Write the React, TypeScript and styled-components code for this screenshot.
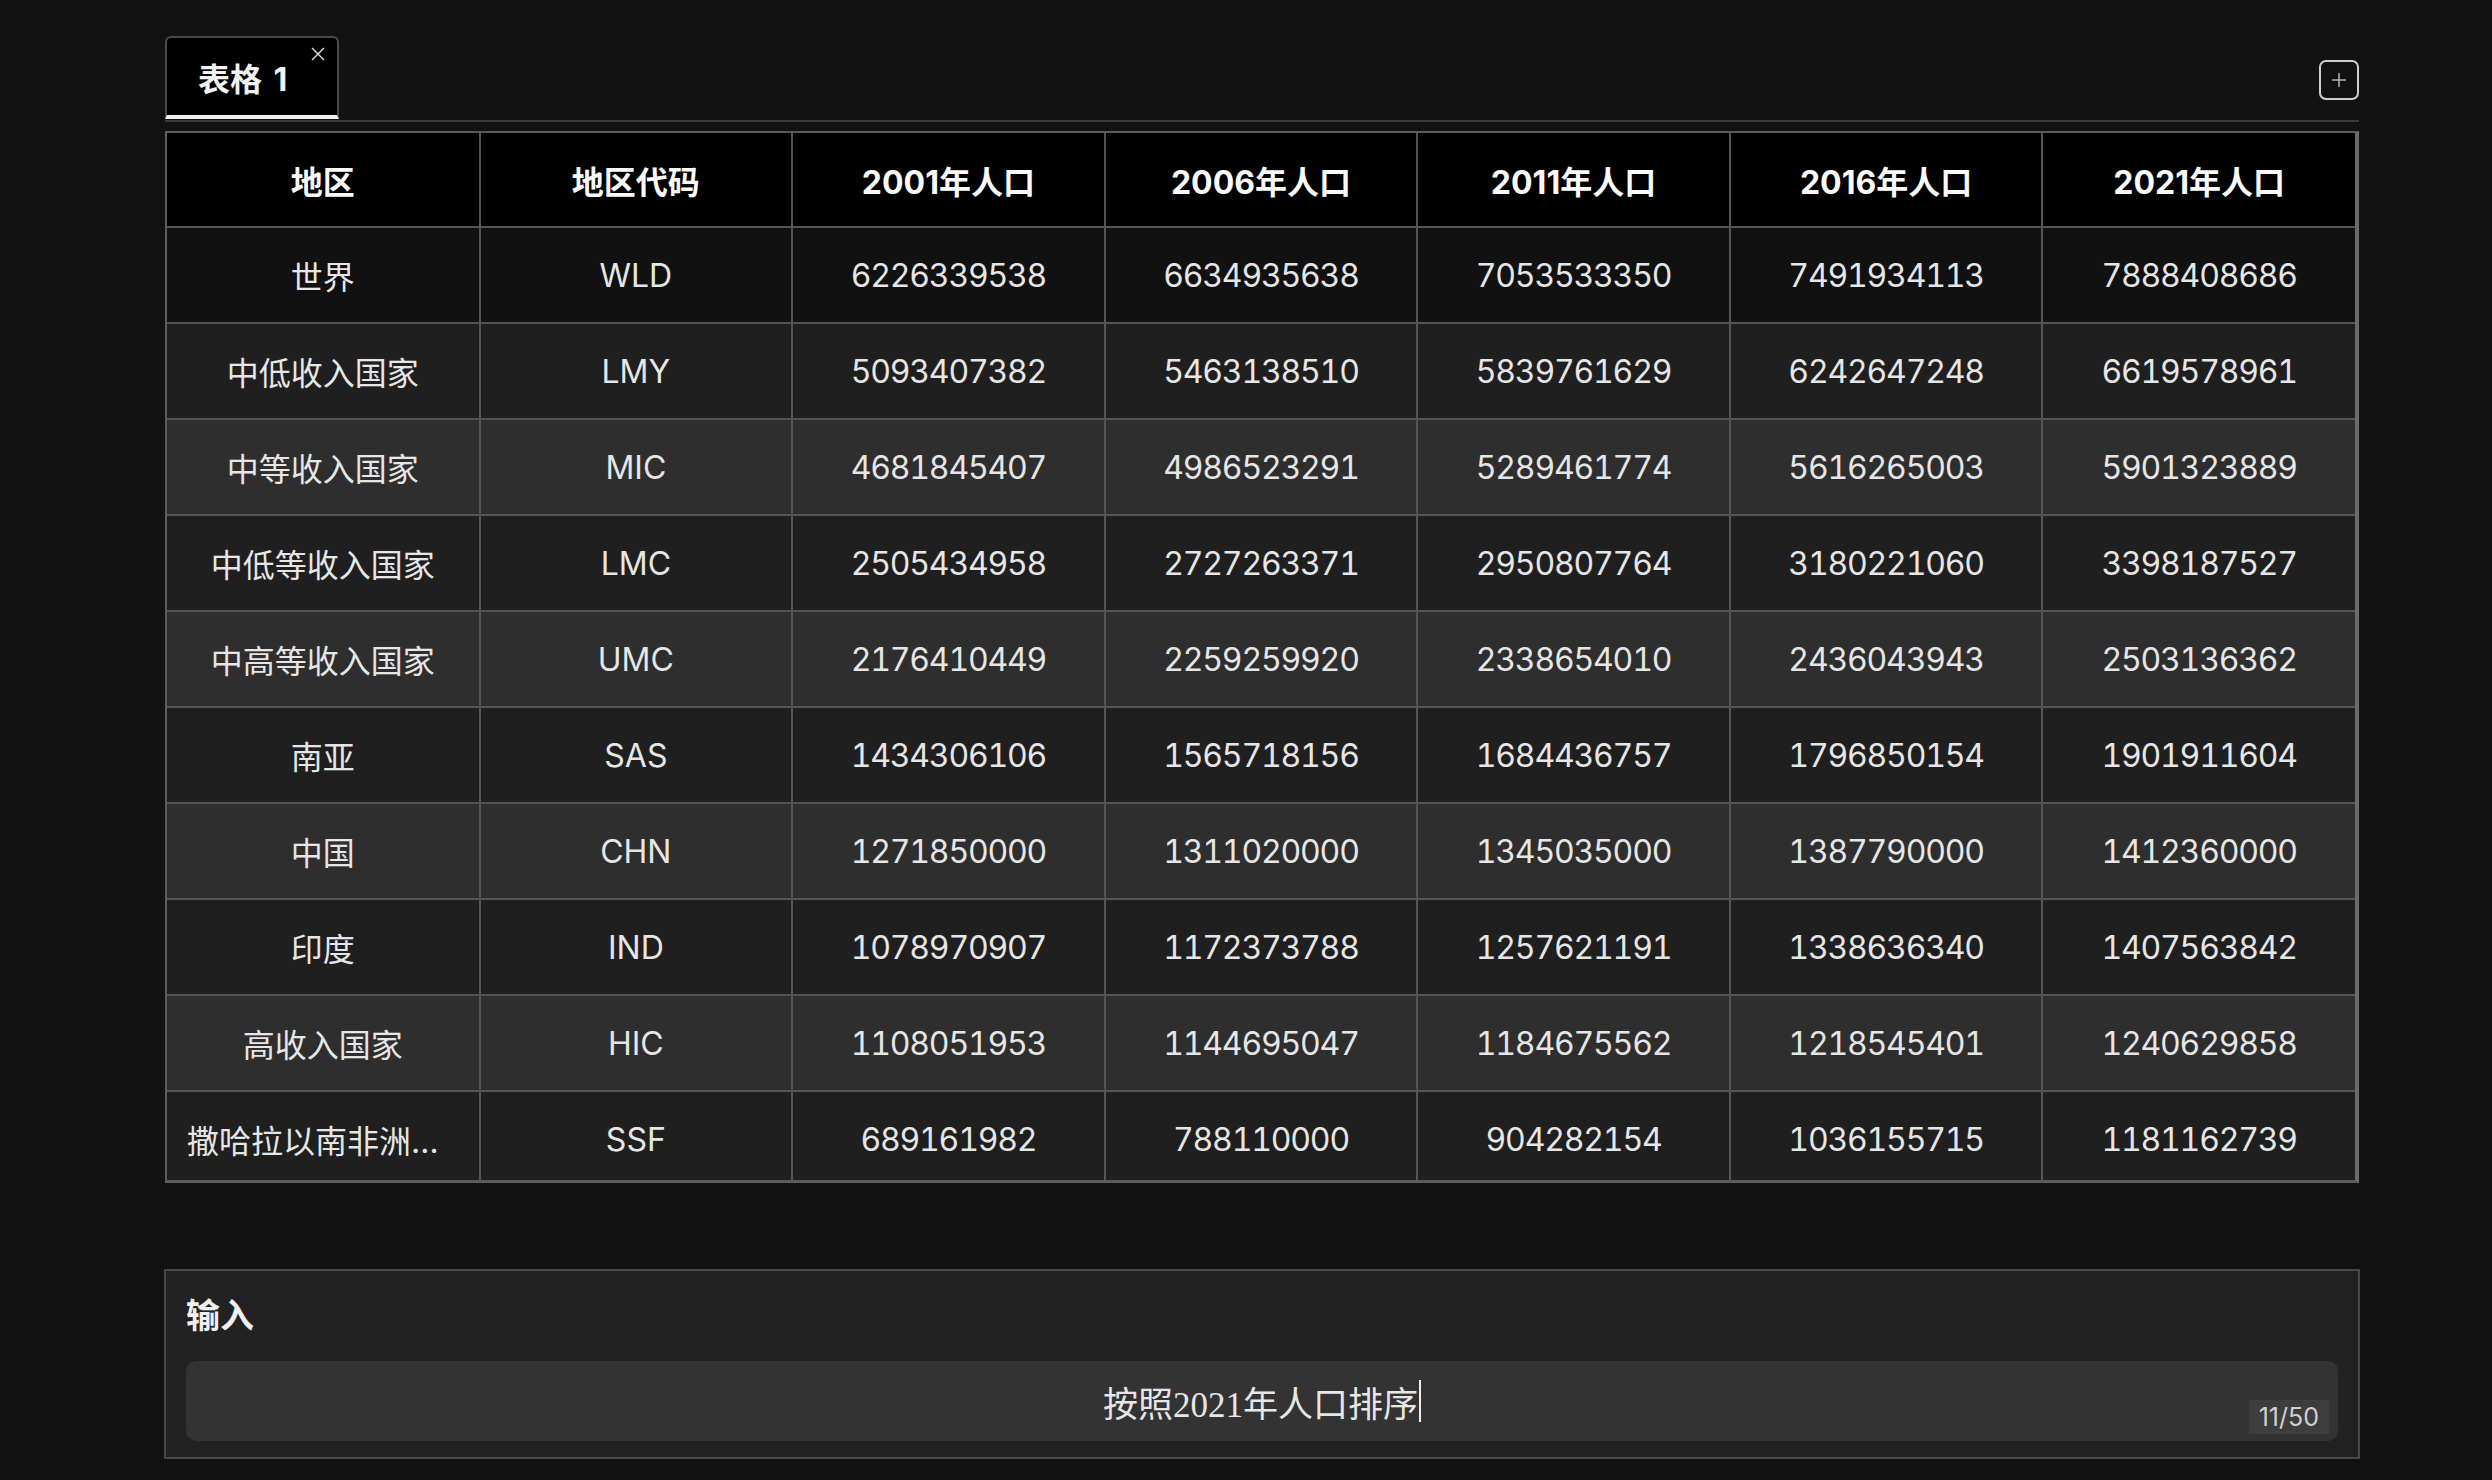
import styled, { createGlobalStyle } from 'styled-components';

const GlobalStyle = createGlobalStyle`
  body {
    margin: 0;
    background: #121212;
    color: #e8e8e8;
    font-family: Inter, "Noto Sans CJK SC", sans-serif;
  }
`;

const Page = styled.div`
  width: 2194px;
  margin-left: 165px;
  padding-top: 36px;
`;

const TabBar = styled.div`
  display: flex;
  align-items: center;
  justify-content: space-between;
  border-bottom: 2px solid #3a3a3a;
  padding-bottom: 1px;
`;

const Tab = styled.div`
  position: relative;
  box-sizing: border-box;
  width: 174px;
  height: 83px;
  display: flex;
  align-items: center;
  padding-left: 31px;
  background: #000;
  border: 2px solid #4a4a4a;
  border-bottom: 4px solid #f2f2f2;
  border-radius: 6px 6px 0 0;
  color: #f2f2f2;
  font-size: 32px;
  font-weight: 700;
  word-spacing: 4px;
`;

const CloseIcon = styled.svg`
  position: absolute;
  top: 9px;
  right: 12px;
  width: 14px;
  height: 14px;
`;

const AddButton = styled.button`
  width: 40px;
  height: 40px;
  margin-top: 4px;
  padding: 0;
  display: flex;
  align-items: center;
  justify-content: center;
  background: transparent;
  border: 2px solid #cfcfcf;
  border-radius: 7px;
`;

const TableFrame = styled.div`
  margin-top: 9px;
  height: 1047px;
  overflow: hidden;
  border: 2px solid #5c5c5c;
  border-right: 4px solid #6a6a6a;
  border-bottom-width: 3px;
`;

const Table = styled.table`
  width: 100%;
  border-collapse: collapse;
  table-layout: fixed;
`;

const Th = styled.th`
  height: 93px;
  background: #000;
  color: #fafafa;
  font-size: 32px;
  font-weight: 700;
  border: 2px solid #555;
  border-top: none;
  padding: 0 20px;
  &:first-child { border-left: none; }
  &:last-child { border-right: none; }
`;

const Row = styled.tr<{ $tone: 'first' | 'dark' | 'light' }>`
  background: ${p => (p.$tone === 'first' ? '#111111' : p.$tone === 'dark' ? '#1f1f1f' : '#2e2e2e')};
`;

const Td = styled.td<{ $numeric?: boolean }>`
  height: 94px;
  padding: 0 20px;
  font-size: 32px;
  color: #e6e6e6;
  text-align: center;
  white-space: nowrap;
  overflow: hidden;
  text-overflow: ellipsis;
  border: 2px solid #555;
  font-variant-numeric: ${p => (p.$numeric ? 'tabular-nums' : 'normal')};
  letter-spacing: ${p => (p.$numeric ? '-1.2px' : 'normal')};
  &:first-child { border-left: none; }
  &:last-child { border-right: none; }
`;

const Panel = styled.div`
  margin-top: 86px;
  margin-left: -1px;
  box-sizing: border-box;
  width: 2196px;
  background: #222;
  border: 2px solid #474747;
  padding: 24px 20px 16px;
`;

const Label = styled.div`
  font-family: "Liberation Serif", "Noto Sans CJK SC", serif;
  font-size: 34px;
  font-weight: 700;
  color: #efefef;
  line-height: 44px;
`;

const InputBox = styled.div`
  position: relative;
  margin-top: 22px;
  height: 80px;
  background: #333;
  border-radius: 10px;
  display: flex;
  align-items: center;
  justify-content: center;
  font-family: "Liberation Serif", "Noto Sans CJK SC", serif;
  font-size: 35px;
  color: #e6e6e6;
`;

const Caret = styled.span`
  display: inline-block;
  width: 2px;
  height: 42px;
  margin-left: 1px;
  background: #eee;
`;

const Counter = styled.span`
  position: absolute;
  right: 9px;
  bottom: 7px;
  padding: 2px 10px;
  background: #3d3d3d;
  color: #cfcfcf;
  font-family: Inter, sans-serif;
  font-size: 25px;
`;

const headers = ['地区', '地区代码', '2001年人口', '2006年人口', '2011年人口', '2016年人口', '2021年人口'];

const rows: string[][] = [
  ['世界', 'WLD', '6226339538', '6634935638', '7053533350', '7491934113', '7888408686'],
  ['中低收入国家', 'LMY', '5093407382', '5463138510', '5839761629', '6242647248', '6619578961'],
  ['中等收入国家', 'MIC', '4681845407', '4986523291', '5289461774', '5616265003', '5901323889'],
  ['中低等收入国家', 'LMC', '2505434958', '2727263371', '2950807764', '3180221060', '3398187527'],
  ['中高等收入国家', 'UMC', '2176410449', '2259259920', '2338654010', '2436043943', '2503136362'],
  ['南亚', 'SAS', '1434306106', '1565718156', '1684436757', '1796850154', '1901911604'],
  ['中国', 'CHN', '1271850000', '1311020000', '1345035000', '1387790000', '1412360000'],
  ['印度', 'IND', '1078970907', '1172373788', '1257621191', '1338636340', '1407563842'],
  ['高收入国家', 'HIC', '1108051953', '1144695047', '1184675562', '1218545401', '1240629858'],
  ['撒哈拉以南非洲地区', 'SSF', '689161982', '788110000', '904282154', '1036155715', '1181162739'],
];

const App = () => {
  const query = '按照2021年人口排序';

  return (
    <>
      <GlobalStyle />
      <Page>
        <TabBar>
          <Tab>
            表格 1
            <CloseIcon viewBox="0 0 14 14">
              <path d="M1 1L13 13M13 1L1 13" stroke="#e0e0e0" strokeWidth="1.4" fill="none" />
            </CloseIcon>
          </Tab>
          <AddButton>
            <svg width="18" height="18" viewBox="0 0 18 18">
              <path d="M9 2V16M2 9H16" stroke="#b5b5b5" strokeWidth="1.5" fill="none" />
            </svg>
          </AddButton>
        </TabBar>

        <TableFrame>
          <Table>
            <thead>
              <tr>
                {headers.map(h => (
                  <Th key={h}>{h}</Th>
                ))}
              </tr>
            </thead>
            <tbody>
              {rows.map((row, i) => (
                <Row key={row[1]} $tone={i === 0 ? 'first' : i % 2 === 1 ? 'dark' : 'light'}>
                  {row.map((cell, j) => (
                    <Td key={j} $numeric={j >= 2}>
                      {cell}
                    </Td>
                  ))}
                </Row>
              ))}
            </tbody>
          </Table>
        </TableFrame>

        <Panel>
          <Label>输入</Label>
          <InputBox>
            <span>{query}</span>
            <Caret />
            <Counter>{query.length}/50</Counter>
          </InputBox>
        </Panel>
      </Page>
    </>
  );
};

export default App;
